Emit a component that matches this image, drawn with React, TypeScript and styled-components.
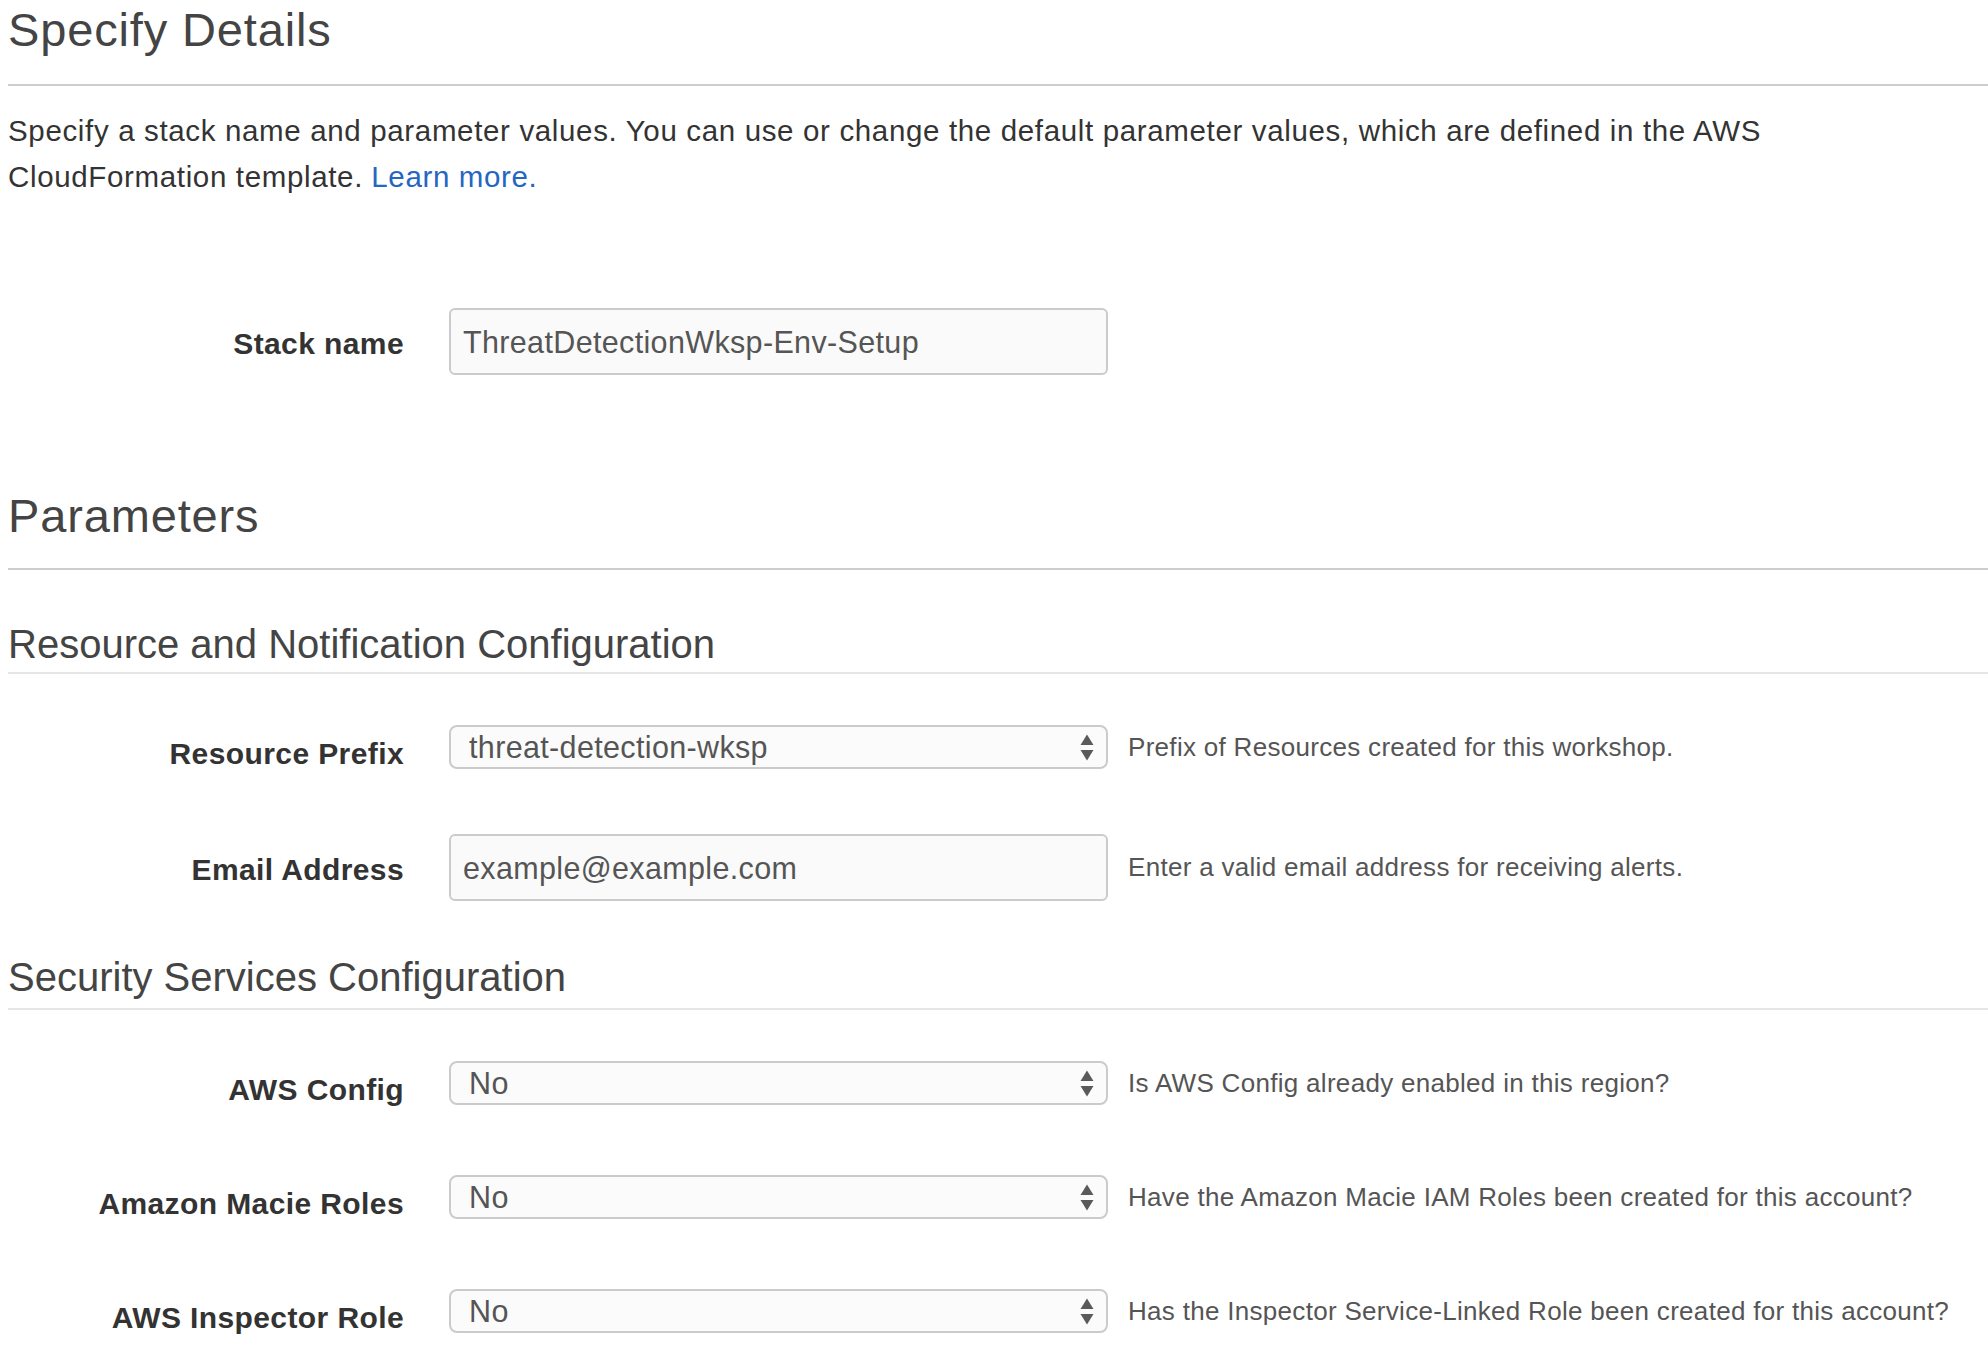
import React from "react";
import styled, { createGlobalStyle } from "styled-components";

const GlobalStyle = createGlobalStyle`
  html, body {
    margin: 0;
    padding: 0;
    background: #ffffff;
  }
  body {
    font-family: "Liberation Sans", Arial, Helvetica, sans-serif;
    -webkit-font-smoothing: antialiased;
  }
  *, *::before, *::after {
    box-sizing: border-box;
  }
`;

const Page = styled.main`
  display: flex;
  flex-direction: column;
  padding: 2px 0 20px 8px;
  color: #333333;
`;

const PageTitle = styled.h1<{ $mt?: number }>`
  margin: ${(p) => p.$mt ?? 0}px 0 0;
  font-size: 47px;
  line-height: 56px;
  font-weight: 400;
  letter-spacing: 0.85px;
  color: #444444;
`;

const SectionTitle = styled.h2<{ $mt: number }>`
  margin: ${(p) => p.$mt}px 0 0;
  font-size: 40px;
  line-height: 48px;
  font-weight: 400;
  color: #444444;
`;

const Rule = styled.hr<{ $light?: boolean; $mt: number }>`
  margin: ${(p) => p.$mt}px 0 0;
  border: 0;
  height: 2px;
  width: 100%;
  background: ${(p) => (p.$light ? "#e6e6e6" : "#cdcdcd")};
`;

const Intro = styled.p`
  margin: 22px 0 0;
  font-size: 29.5px;
  line-height: 46px;
  letter-spacing: 0.65px;
  color: #333333;
`;

const IntroLine = styled.span`
  display: block;
  white-space: nowrap;
`;

const LearnMore = styled.a`
  margin-left: 0.28em;
  color: #2566c1;
  text-decoration: none;
`;

type Kind = "text" | "select";

const FieldRow = styled.div<{ $mt: number }>`
  display: flex;
  align-items: flex-start;
  margin-top: ${(p) => p.$mt}px;
`;

const FieldLabel = styled.label<{ $kind: Kind }>`
  flex: 0 0 396px;
  margin-top: ${(p) => (p.$kind === "text" ? 21 : 14)}px;
  text-align: right;
  font-size: 30px;
  line-height: 30px;
  font-weight: 700;
  letter-spacing: 0.4px;
  color: #333333;
`;

const TextBox = styled.div`
  flex: none;
  display: flex;
  align-items: center;
  width: 659px;
  height: 67px;
  margin-left: 45px;
  padding: 0 12px;
  border: 2px solid #cbcbcb;
  border-radius: 6px;
  background: #fafafa;
  font-size: 30.5px;
  line-height: 40px;
  letter-spacing: 0.35px;
  color: #555555;
  white-space: nowrap;
`;

const SelectBox = styled.div`
  flex: none;
  display: flex;
  align-items: center;
  justify-content: space-between;
  width: 659px;
  height: 44px;
  margin-left: 45px;
  padding: 0 12px 0 18px;
  border: 2px solid #cbcbcb;
  border-radius: 8px;
  background: #fbfbfb;
  font-size: 30.5px;
  line-height: 40px;
  letter-spacing: 0.35px;
  color: #555555;
  white-space: nowrap;
`;

const Help = styled.span`
  align-self: center;
  margin-left: 20px;
  font-size: 26px;
  letter-spacing: 0.3px;
  color: #555555;
  white-space: nowrap;
`;

const SpinnerIcon = () => (
  <svg width="14" height="27" viewBox="0 0 14 27" aria-hidden="true">
    <path d="M7 0.5L13.5 11H0.5Z" fill="#5a5a5a" />
    <path d="M0.5 16H13.5L7 26.5Z" fill="#5a5a5a" />
  </svg>
);

type Field = {
  label: string;
  kind: Kind;
  value: string;
  help?: string;
  mt: number;
};

const resourceFields: Field[] = [
  {
    label: "Resource Prefix",
    kind: "select",
    value: "threat-detection-wksp",
    help: "Prefix of Resources created for this workshop.",
    mt: 51,
  },
  {
    label: "Email Address",
    kind: "text",
    value: "example@example.com",
    help: "Enter a valid email address for receiving alerts.",
    mt: 65,
  },
];

const securityFields: Field[] = [
  {
    label: "AWS Config",
    kind: "select",
    value: "No",
    help: "Is AWS Config already enabled in this region?",
    mt: 51,
  },
  {
    label: "Amazon Macie Roles",
    kind: "select",
    value: "No",
    help: "Have the Amazon Macie IAM Roles been created for this account?",
    mt: 70,
  },
  {
    label: "AWS Inspector Role",
    kind: "select",
    value: "No",
    help: "Has the Inspector Service-Linked Role been created for this account?",
    mt: 70,
  },
];

const FormField = ({ field }: { field: Field }) => (
  <FieldRow $mt={field.mt}>
    <FieldLabel $kind={field.kind}>{field.label}</FieldLabel>
    {field.kind === "text" ? (
      <TextBox role="textbox">{field.value}</TextBox>
    ) : (
      <SelectBox role="combobox">
        <span>{field.value}</span>
        <SpinnerIcon />
      </SelectBox>
    )}
    {field.help && <Help>{field.help}</Help>}
  </FieldRow>
);

export default function App() {
  return (
    <>
      <GlobalStyle />
      <Page>
        <PageTitle>Specify Details</PageTitle>
        <Rule $mt={26} />
        <Intro>
          <IntroLine>
            Specify a stack name and parameter values. You can use or change the default
            parameter values, which are defined in the AWS
          </IntroLine>
          <IntroLine>
            CloudFormation template.
            <LearnMore href="#">Learn more.</LearnMore>
          </IntroLine>
        </Intro>

        <FormField
          field={{ label: "Stack name", kind: "text", value: "ThreatDetectionWksp-Env-Setup", mt: 108 }}
        />

        <PageTitle $mt={113}>Parameters</PageTitle>
        <Rule $mt={24} />

        <SectionTitle $mt={50}>Resource and Notification Configuration</SectionTitle>
        <Rule $light $mt={4} />
        {resourceFields.map((f) => (
          <FormField key={f.label} field={f} />
        ))}

        <SectionTitle $mt={52}>Security Services Configuration</SectionTitle>
        <Rule $light $mt={7} />
        {securityFields.map((f) => (
          <FormField key={f.label} field={f} />
        ))}
      </Page>
    </>
  );
}
